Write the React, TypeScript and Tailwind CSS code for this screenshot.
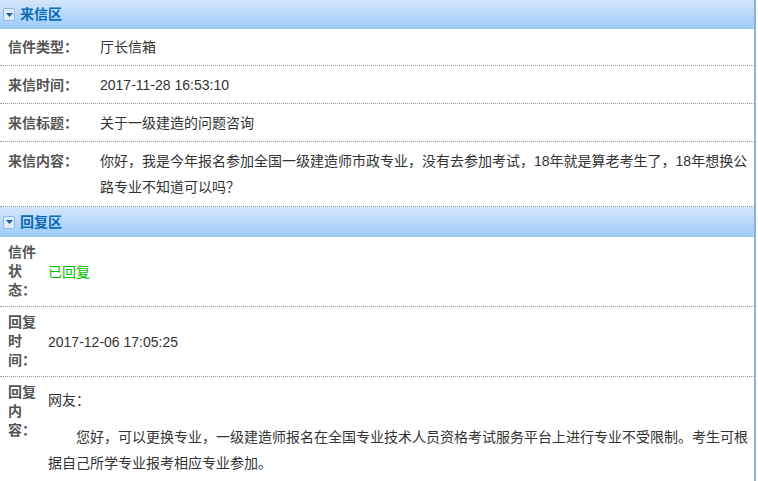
import React from "react";

const font = { fontFamily: '"Liberation Sans", Arial, "Noto Sans CJK SC", sans-serif' };

function Header({ title, tall }: { title: string; tall?: boolean }) {
  return (
    <div className={`flex ${tall ? "h-[30px]" : "h-[29px]"} items-center bg-gradient-to-b from-[#d4e7fc] to-[#9ccaf8] pl-[3px]`}>
      <div className="flex h-[13px] w-[12px] items-center justify-center rounded-[2px] border border-[#8fb8e2] bg-[#dcebfb]">
        <svg width="7" height="4" viewBox="0 0 7 4">
          <path d="M0 0 L7 0 L3.5 4 Z" fill="#1d5d9e" />
        </svg>
      </div>
      <span className="ml-[5px] text-[14px] font-bold text-[#0b6bb4]">{title}</span>
    </div>
  );
}

function Row({ label, children, first, end }: { label: string; children: React.ReactNode; first?: boolean; end?: boolean }) {
  return (
    <div className={`flex ${first ? "pt-[5px]" : "pt-[6px]"} ${end ? "pb-[6px]" : "pb-[5px]"} border-b border-dotted border-[#9a9a9a]`}>
      <div className="w-[100px] shrink-0 pl-[8px] text-[14px] leading-[26px] font-bold text-[#555]">{label}</div>
      <div className="flex-1 pr-[6px] text-[14px] leading-[26px] text-[#333]">{children}</div>
    </div>
  );
}

function RRow({ label, children, center, last }: { label: string; children: React.ReactNode; center?: boolean; last?: boolean }) {
  return (
    <div className={`flex min-h-[70px] ${center ? "items-center" : "items-start"} ${last ? "" : "border-b border-dotted border-[#9a9a9a]"}`}>
      <div className="w-[48px] shrink-0 self-start pl-[8px] pt-[6px] pr-[6px] text-[14px] leading-[19px] font-bold text-[#555]">{label}</div>
      <div className="flex-1 pr-[6px] text-[14px] leading-[26px] text-[#333]">{children}</div>
    </div>
  );
}

export default function App() {
  return (
    <div className="h-[481px] w-[758px] overflow-hidden bg-white" style={font}>
      <div className="h-full w-[756px] border-r-2 border-[#8db2d6]">
        <Header title="来信区" />
        <Row label="信件类型：" first>厅长信箱</Row>
        <Row label="来信时间：">2017-11-28 16:53:10</Row>
        <Row label="来信标题：">关于一级建造的问题咨询</Row>
        <Row label="来信内容：" end>
          你好，我是今年报名参加全国一级建造师市政专业，没有去参加考试，18年就是算老考生了，18年想换公路专业不知道可以吗？
        </Row>
        <Header title="回复区" tall />
        <RRow label="信件状态：" center>
          <span className="text-[#00c000]">已回复</span>
        </RRow>
        <RRow label="回复时间：" center>
          2017-12-06 17:05:25
        </RRow>
        <RRow label="回复内容：" last>
          <div className="pt-[10px]">
            <p>网友：</p>
            <p className="mt-[11px] indent-[28px]">
              您好，可以更换专业，一级建造师报名在全国专业技术人员资格考试服务平台上进行专业不受限制。考生可根据自己所学专业报考相应专业参加。
            </p>
          </div>
        </RRow>
      </div>
    </div>
  );
}
